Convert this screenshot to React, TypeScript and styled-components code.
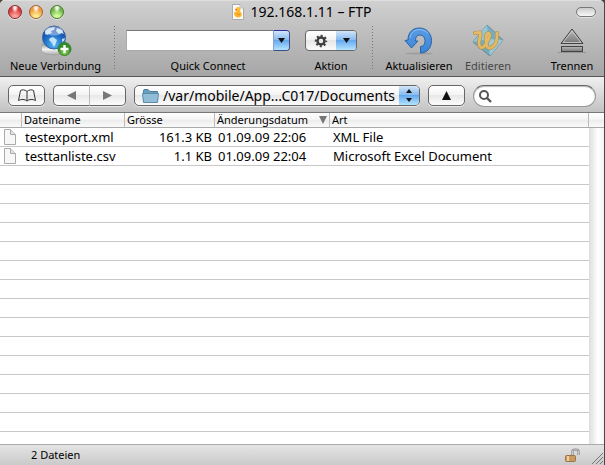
import React from "react";
import styled, { createGlobalStyle } from "styled-components";

const Global = createGlobalStyle`
  * { box-sizing: border-box; }
  html, body, #root { height: 100%; margin: 0; }
  body { background: #4a4743; overflow: hidden; }
  body, button, input, select { font-family: "Noto Sans", "Open Sans", sans-serif; color: #000; }
  button, input, select { margin: 0; padding: 0; border: 0; background: none; }
`;

const Window = styled.main`
  height: 100vh;
  margin-right: 1px;
  display: flex;
  flex-direction: column;
  background: #fff;
  border-radius: 5px 5px 0 0;
  overflow: hidden;
`;

const Header = styled.header`
  flex: none;
  height: 77px;
  border-bottom: 1px solid #555;
  border-top: 1px solid #dedede;
  background: linear-gradient(#d0d0d0, #a6a6a6);
`;

const TitleBar = styled.div`
  display: flex;
  align-items: center;
  height: 21px;
  padding: 0 8px;
`;

const Lights = styled.div`
  display: flex;
  gap: 7px;
  flex: 1;
`;

const Light = styled.button<{ $rim: string; $mid: string; $glow: string }>`
  width: 14px;
  height: 14px;
  border-radius: 50%;
  border: 1px solid ${(p) => p.$rim};
  background:
    radial-gradient(ellipse at 50% 12%, rgba(255, 255, 255, 0.9) 0 12%, transparent 38%),
    radial-gradient(circle at 50% 95%, ${(p) => p.$glow} 0 15%, ${(p) => p.$mid} 65%);
  box-shadow: 0 1px 0 rgba(255, 255, 255, 0.5);
`;

const Title = styled.h1`
  display: flex;
  align-items: center;
  gap: 6px;
  margin: 0;
  font-size: 14px;
  line-height: 20px;
  font-weight: 400;
`;

const TitleEnd = styled.div`
  display: flex;
  flex: 1;
  justify-content: flex-end;
`;

const Pill = styled.button`
  width: 20px;
  height: 10px;
  border: 1px solid #777;
  border-radius: 5px;
  background: linear-gradient(#ccc, #f8f8f8);
  box-shadow: 0 1px 0 rgba(255, 255, 255, 0.5);
`;

const Toolbar = styled.div`
  display: flex;
  height: 54px;
  padding: 2px 8px 0;
`;

const Tool = styled.div<{ $width: number }>`
  display: flex;
  flex-direction: column;
  align-items: center;
  flex: none;
  width: ${(p) => p.$width}px;
`;

const ToolButton = styled.button<{ $width: number; $dim?: boolean }>`
  display: flex;
  flex-direction: column;
  align-items: center;
  flex: none;
  width: ${(p) => p.$width}px;
  opacity: ${(p) => (p.$dim ? 0.6 : 1)};
`;

const Face = styled.span`
  display: flex;
  align-items: center;
  justify-content: center;
  height: 33px;
`;

const Label = styled.span`
  font-size: 11px;
  line-height: 18px;
  white-space: nowrap;
`;

const Divider = styled.div<{ $before: number }>`
  flex: none;
  width: 1px;
  height: 44px;
  margin: 2px 11px 0 ${(p) => p.$before}px;
  background: repeating-linear-gradient(#777 0 1px, transparent 1px 3px);
`;

const Spacer = styled.div`
  flex: 1;
`;

const Combo = styled.div`
  display: flex;
  width: 164px;
  height: 21px;
`;

const ComboInput = styled.input`
  flex: 1;
  min-width: 0;
  padding: 0 4px;
  font-size: 13px;
  background: #fff;
  border: 1px solid #aaa;
  border-top-color: #777;
  border-right: 0;
`;

const BlueEnd = styled.span`
  display: flex;
  align-items: center;
  justify-content: center;
  flex: none;
  width: 20px;
  height: 100%;
  background: linear-gradient(#d3e5f8, #8abcf0 45%, #65a9ee 50%, #b4e4ff);
`;

const ComboButton = styled.button`
  width: 17px;
  height: 21px;
  overflow: hidden;
  display: flex;
  justify-content: center;
  border: 1px solid #3b4d82;
  border-top-color: #2a2f9c;
  border-left-color: #8ba0c8;
  border-radius: 0 4px 4px 0;
`;

const GearButton = styled.button`
  display: flex;
  width: 52px;
  height: 21px;
  overflow: hidden;
  border: 1px solid #666;
  border-radius: 4px;
  background: linear-gradient(#fff, #f4f4f4 45%, #e6e6e6 50%, #fafafa);
`;

const GearFace = styled.span`
  display: flex;
  flex: 1;
  height: 100%;
  align-items: center;
  justify-content: center;
`;

const NavBar = styled.nav`
  display: flex;
  flex: none;
  gap: 8px;
  height: 36px;
  padding: 8px 8px 0;
  border-bottom: 1px solid #777;
  background: linear-gradient(#f0f0f0, #c2c2c2);
`;

const NavButton = styled.button<{ $width: number }>`
  display: flex;
  flex: none;
  align-items: center;
  justify-content: center;
  width: ${(p) => p.$width}px;
  height: 21px;
  border: 1px solid #666;
  border-radius: 5px;
  background: linear-gradient(#fff, #f4f4f4 45%, #e8e8e8 50%, #fcfcfc);
  box-shadow: 0 1px 0 rgba(255, 255, 255, 0.6);
`;

const Segments = styled.div`
  display: flex;
  flex: none;
  & > :first-child { border-radius: 5px 0 0 5px; border-right-color: #bbb; }
  & > :last-child { border-radius: 0 5px 5px 0; border-left: 0; }
`;

const PathBox = styled.label`
  display: flex;
  flex: none;
  align-items: center;
  width: 286px;
  height: 21px;
  padding-left: 7px;
  overflow: hidden;
  border: 1px solid #666;
  border-radius: 5px;
  background: linear-gradient(#fff, #f4f4f4 45%, #e8e8e8 50%, #fcfcfc);
  box-shadow: 0 1px 0 rgba(255, 255, 255, 0.6);
`;

const PathSelect = styled.select`
  flex: 1;
  min-width: 0;
  height: 19px;
  padding-left: 4px;
  appearance: none;
  font-size: 14px;
  line-height: 19px;
`;

const SearchBox = styled.label`
  display: flex;
  flex: 1;
  min-width: 0;
  align-items: center;
  height: 22px;
  padding-left: 5px;
  border: 1px solid #999;
  border-top-color: #666;
  border-radius: 11px;
  background: #fff;
  box-shadow: inset 0 1px 1px #bbb;
  & > svg { flex: none; }
`;

const SearchInput = styled.input`
  flex: 1;
  min-width: 0;
  margin: 0 8px 0 4px;
  font-size: 13px;
  outline: 0;
`;

const Listing = styled.section`
  display: flex;
  flex: 1;
  min-height: 0;
  overflow: hidden;
`;

const FileTable = styled.table`
  flex: 1;
  width: 100%;
  table-layout: fixed;
  border-collapse: separate;
  border-spacing: 0;
`;

const HeadCell = styled.th`
  height: 15px;
  padding: 0 2px;
  border-right: 1px solid #bbb;
  border-bottom: 1px solid #aaa;
  background: linear-gradient(#fff, #f6f6f6 45%, #ececec 50%, #fafafa);
  font-size: 11px;
  line-height: 14px;
  font-weight: 400;
  text-align: left;
  white-space: nowrap;
`;

const SortHead = styled.span`
  display: flex;
  align-items: center;
  justify-content: space-between;
`;

const Cell = styled.td<{ $right?: boolean }>`
  height: 19px;
  padding: 0 3px;
  border-bottom: 1px solid #c8c8c8;
  font-size: 13px;
  line-height: 18px;
  text-align: ${(p) => (p.$right ? "right" : "left")};
  white-space: nowrap;
  & > svg { display: block; margin-left: 1px; }
`;

const ScrollTrack = styled.div`
  flex: none;
  width: 15px;
  background: linear-gradient(90deg, #dedede, #f3f3f3 40%, #fff 60%, #f4f4f4);
`;

const TrackHead = styled.div`
  height: 15px;
  border-bottom: 1px solid #aaa;
  background: linear-gradient(#fff, #f6f6f6 45%, #ececec 50%, #fafafa);
`;

const StatusBar = styled.footer`
  display: flex;
  flex: none;
  align-items: center;
  height: 21px;
  padding-left: 31px;
  border-top: 1px solid #aaa;
  background: linear-gradient(#e4e4e4, #cacaca);
  font-size: 11px;
  line-height: 20px;
`;

const Grip = styled.span`
  display: flex;
  align-self: flex-end;
  margin-left: 11px;
`;

const Triangle = ({ d, w, h, fill = "#111" }: { d: string; w: number; h: number; fill?: string }) => (
  <svg width={w} height={h} viewBox={`0 0 ${w} ${h}`} aria-hidden="true">
    <path d={d} fill={fill} />
  </svg>
);
const DownMark = () => <Triangle w={7} h={5} d="M0 0H7L3.5 5Z" />;

const DuckDoc = () => (
  <svg width="12" height="16" viewBox="0 0 12 16" aria-hidden="true">
    <path d="M.5.5H8L11.5 4V15.5H.5Z" fill="#fafafa" stroke="#aaa" />
    <path d="M8 .5V4H11.5" fill="#ddd" stroke="#bbb" />
    <circle cx="6" cy="5.5" r="2.5" fill="#fb3" />
    <path d="M2 8C4 9 6 6 8 7.500Q10.500 9 9.500 12Q8 14 5 13.500Q1.500 12 2 8Z" fill="#fcb52c" />
    <path d="M3 5L5 5.500L4 7Z" fill="#e8602c" />
    <path d="M5 9.500Q6 12 8 10" stroke="#e58a10" fill="none" />
  </svg>
);

const Globe = () => (
  <svg width="32" height="32" viewBox="0 0 32 32" aria-hidden="true">
    <defs>
      <radialGradient id="sea" cx=".5" cy=".8" r=".8">
        <stop offset="0" stopColor="#55b8f5" />
        <stop offset=".55" stopColor="#1c6ac4" />
        <stop offset="1" stopColor="#1c3a85" />
      </radialGradient>
      <linearGradient id="stand" x2="0" y2="1">
        <stop offset="0" stopColor="#999" />
        <stop offset=".5" stopColor="#f4f4f4" />
        <stop offset="1" stopColor="#aaa" />
      </linearGradient>
      <radialGradient id="plus" cy=".8">
        <stop offset="0" stopColor="#8bd155" />
        <stop offset="1" stopColor="#348b28" />
      </radialGradient>
    </defs>
    <path d="M2 19Q0 26 4 28Q10 31 20 29L25 21Z" fill="url(#stand)" stroke="#999" strokeWidth=".5" />
    <circle cx="14" cy="12.500" r="11.500" fill="url(#sea)" stroke="#3469a3" />
    <path d="M5 6L9 3L15 2L14 5L11 6L12 8L9 9L7 10L5 9ZM17 3L22 5L24 9L21 8L19 9L16 6ZM10 13L13 12L17 15L16 18L14 22L12 18L9 15ZM22 14L25 13L24 16L22 17Z" fill="#d9f0fc" opacity=".85" />
    <ellipse cx="14" cy="6" rx="9" ry="4.500" fill="#fff" opacity=".4" />
    <circle cx="24.500" cy="24" r="6.500" fill="url(#plus)" stroke="#37852a" />
    <path d="M24.500 20V28M20.500 24H28.500" stroke="#fff" strokeWidth="2.400" />
  </svg>
);

const Gear = () => (
  <svg width="14" height="14" viewBox="-7 -7 14 14" aria-hidden="true">
    <circle r="3.500" fill="none" stroke="#3c3c3c" strokeWidth="2.400" />
    <circle r="5.200" fill="none" stroke="#3c3c3c" strokeWidth="2" strokeDasharray="2.042 2.042" strokeDashoffset="1.020" />
  </svg>
);

const Reload = () => (
  <svg width="30" height="28" viewBox="0 0 30 28" aria-hidden="true">
    <defs>
      <linearGradient id="arrow" x2="0" y2="1">
        <stop offset="0" stopColor="#5b9de3" />
        <stop offset="1" stopColor="#3a84d8" />
      </linearGradient>
    </defs>
    <ellipse cx="15" cy="26.500" rx="14" ry="1" fill="#777" opacity=".35" />
    <path d="M4 13C4 5 9 1 15.500 1C23 1 27.500 7 27.500 13.500C27.500 21 23 26 16.500 26V19.500C20 19 21 17 21 13.500C21 10 18.500 8 16 8C13 8 11.500 10 11.500 14H14L7.500 21L1 13.500Z" fill="url(#arrow)" stroke="#2b62a5" />
    <path d="M6 11C7 5 11 2.500 15.500 2.500C19 2.500 22 4 24 6.500" fill="none" stroke="#94c5f4" opacity=".8" />
  </svg>
);

const W_STROKE = "M3 8L8 7.500Q9 9 7.500 14Q6 21 9 22.500Q12 23 15 17Q19 10 17 8.500Q14 7 14 15Q14 24 18.500 23Q26 20 25 8";
const EditMark = () => (
  <svg width="32" height="31" viewBox="0 0 32 31" aria-hidden="true">
    <path d="M15 0L31 15L18 31L1 17Z" fill="#4aa3c0" stroke="#276d88" />
    <path d="M15 0L16 14L1 17Z" fill="#7ccce0" />
    <path d="M31 15L16 14L18 31Z" fill="#92d4e6" />
    <path d={W_STROKE} fill="none" stroke="#9e711b" strokeWidth="4" strokeLinecap="round" />
    <path d={W_STROKE} fill="none" stroke="#ffb92a" strokeWidth="2.800" strokeLinecap="round" />
  </svg>
);

const Eject = () => (
  <svg width="28" height="26" viewBox="0 0 28 26" aria-hidden="true">
    <defs>
      <linearGradient id="metal" x2="0" y2="1">
        <stop offset="0" stopColor="#bbb" />
        <stop offset="1" stopColor="#777" />
      </linearGradient>
    </defs>
    <path d="M0 24.500H28" stroke="#777" opacity=".5" />
    <path d="M14 1L25 15.500H3Z" fill="url(#metal)" stroke="#444" strokeLinejoin="round" />
    <path d="M14 3L23 14.500H5Z" fill="none" stroke="#ddd" opacity=".7" />
    <rect x="3.500" y="18.500" width="21" height="5" fill="url(#metal)" stroke="#444" />
  </svg>
);

const Book = () => (
  <svg width="18" height="13" viewBox="0 0 18 13" fill="none" stroke="#333" aria-hidden="true">
    <path d="M9 2.500C7 .5 4 .5 2.500 1.500L.5 11.500C3 10 7 10 9 12C11 10 15 10 17.500 11.500L15.500 1.500C14 .5 11 .5 9 2.500ZM9 2.500V12" />
  </svg>
);

const Folder = () => (
  <svg width="17" height="14" viewBox="0 0 17 14" aria-hidden="true">
    <path d="M1.500 12.500V1.500Q1.500.5 3 .5H6L8 2.500H15.500V12.500Z" fill="#699dbe" stroke="#4b7d9f" />
    <path d="M.5 4.500H16.500L15.500 13.500H1.500Z" fill="#92bdd7" stroke="#5a8cac" />
  </svg>
);

const Search = () => (
  <svg width="13" height="13" viewBox="0 0 13 13" fill="none" stroke="#555" aria-hidden="true">
    <circle cx="5" cy="5" r="4" strokeWidth="2" />
    <path d="M8 8L12 12" strokeWidth="2.400" />
  </svg>
);

const Sheet = () => (
  <svg width="12" height="16" viewBox="0 0 12 16" aria-hidden="true">
    <path d="M.5.5H6.500L11.500 5.500V15.500H.5Z" fill="#f7f7f7" stroke="#aaa" />
    <path d="M6.500.5V5.500H11.500" fill="#e2e2e2" stroke="#aaa" />
  </svg>
);

const Padlock = () => (
  <svg width="15" height="15" viewBox="0 0 15 15" aria-hidden="true">
    <path d="M7.500 7V3Q7.500 1.500 10.500 1.500Q13.500 1.500 13.500 3V7" fill="none" stroke="#777" strokeWidth="2" />
    <path d="M7.500 7V3Q7.500 1.500 10.500 1.500Q13.500 1.500 13.500 3V7" fill="none" stroke="#ddd" strokeWidth=".8" />
    <rect x=".5" y="7.500" width="10" height="6" rx="1" fill="#c99a60" stroke="#9b7548" />
    <path d="M3 8V13" stroke="#f0cf9c" strokeWidth="2" />
  </svg>
);

const files = [
  { name: "testexport.xml", size: "161.3 KB", date: "01.09.09 22:06", kind: "XML File" },
  { name: "testtanliste.csv", size: "1.1 KB", date: "01.09.09 22:04", kind: "Microsoft Excel Document" },
];

export default function App() {
  return (
    <>
      <Global />
      <Window>
        <Header>
          <TitleBar>
            <Lights>
              <Light aria-label="Schließen" $rim="#8c2b2b" $mid="#d83a3c" $glow="#ffa29b" />
              <Light aria-label="Minimieren" $rim="#a3602a" $mid="#ef9b3c" $glow="#ffef90" />
              <Light aria-label="Zoomen" $rim="#4a7a32" $mid="#6db546" $glow="#d5ff9c" />
            </Lights>
            <Title><DuckDoc />192.168.1.11 – FTP</Title>
            <TitleEnd><Pill aria-label="Symbolleiste" /></TitleEnd>
          </TitleBar>
          <Toolbar>
            <ToolButton $width={95}><Face><Globe /></Face><Label>Neue Verbindung</Label></ToolButton>
            <Divider $before={11} />
            <Tool $width={164}>
              <Face>
                <Combo>
                  <ComboInput id="quick" />
                  <ComboButton aria-label="Verlauf"><BlueEnd><DownMark /></BlueEnd></ComboButton>
                </Combo>
              </Face>
              <Label as="label" htmlFor="quick">Quick Connect</Label>
            </Tool>
            <Tool $width={82}>
              <Face>
                <GearButton aria-labelledby="action"><GearFace><Gear /></GearFace><BlueEnd><DownMark /></BlueEnd></GearButton>
              </Face>
              <Label id="action">Aktion</Label>
            </Tool>
            <Divider $before={0} />
            <ToolButton $width={70}><Face><Reload /></Face><Label>Aktualisieren</Label></ToolButton>
            <ToolButton $width={68} $dim disabled><Face><EditMark /></Face><Label>Editieren</Label></ToolButton>
            <Spacer />
            <ToolButton $width={48}><Face><Eject /></Face><Label>Trennen</Label></ToolButton>
          </Toolbar>
        </Header>
        <NavBar>
          <NavButton $width={37} aria-label="Lesezeichen"><Book /></NavButton>
          <Segments>
            <NavButton $width={37} aria-label="Zurück"><Triangle w={9} h={9} d="M9 0V9L0 4.500Z" fill="#777" /></NavButton>
            <NavButton $width={36} aria-label="Vorwärts"><Triangle w={9} h={9} d="M0 0V9L9 4.500Z" fill="#777" /></NavButton>
          </Segments>
          <PathBox>
            <Folder />
            <PathSelect aria-label="Pfad"><option>/var/mobile/App...C017/Documents</option></PathSelect>
            <BlueEnd><Triangle w={6} h={13} d="M0 4H6L3 0ZM0 9H6L3 13Z" /></BlueEnd>
          </PathBox>
          <NavButton $width={37} aria-label="Übergeordneter Ordner"><Triangle w={9} h={9} d="M0 9H9L4.500 0Z" /></NavButton>
          <SearchBox><Search /><SearchInput aria-label="Suchen" /></SearchBox>
        </NavBar>
        <Listing>
          <FileTable>
            <colgroup>
              <col width="22" /><col width="103" /><col width="90" /><col width="115" /><col />
            </colgroup>
            <thead>
              <tr>
                <HeadCell />
                <HeadCell>Dateiname</HeadCell>
                <HeadCell>Grösse</HeadCell>
                <HeadCell><SortHead>Änderungsdatum<Triangle w={8} h={8} d="M0 0H8L4 8Z" fill="#777" /></SortHead></HeadCell>
                <HeadCell>Art</HeadCell>
              </tr>
            </thead>
            <tbody>
              {files.map((f) => (
                <tr key={f.name}>
                  <Cell><Sheet /></Cell>
                  <Cell>{f.name}</Cell>
                  <Cell $right>{f.size}</Cell>
                  <Cell>{f.date}</Cell>
                  <Cell>{f.kind}</Cell>
                </tr>
              ))}
              {Array.from({ length: 15 }, (_, i) => (
                <tr key={i}><Cell colSpan={5} /></tr>
              ))}
            </tbody>
          </FileTable>
          <ScrollTrack><TrackHead /></ScrollTrack>
        </Listing>
        <StatusBar>
          2 Dateien
          <Spacer />
          <Padlock />
          <Grip>
            <svg width="13" height="13" viewBox="0 0 13 13" stroke="#777" aria-hidden="true">
              <path d="M1 12L12 1M5 12L12 5M9 12L12 9" />
            </svg>
          </Grip>
        </StatusBar>
      </Window>
    </>
  );
}
